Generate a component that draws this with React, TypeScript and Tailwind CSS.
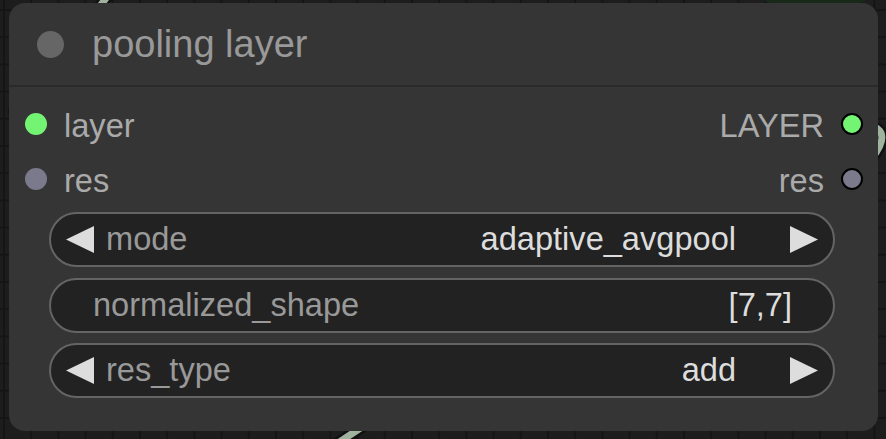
import React from "react";

const font = { fontFamily: '"Liberation Sans", Arial, sans-serif' };

function LeftArrow() {
  return (
    <svg width="28" height="27" viewBox="0 0 28 27" className="shrink-0">
      <polygon points="28,0 0,13.5 28,27" fill="#DDDDDD" />
    </svg>
  );
}

function RightArrow() {
  return (
    <svg width="28" height="27" viewBox="0 0 28 27" className="shrink-0">
      <polygon points="0,0 28,13.5 0,27" fill="#DDDDDD" />
    </svg>
  );
}

function ComboWidget({ label, value }: { label: string; value: string }) {
  return (
    <div className="h-[55px] rounded-full bg-[#222222] border-2 border-[#646464] flex items-center pl-[15px] pr-[15px]">
      <LeftArrow />
      <span className="ml-[12px] text-[32.6px] text-[#999999] leading-none">{label}</span>
      <span className="ml-auto text-[32.6px] text-[#DDDDDD] leading-none">{value}</span>
      <span className="ml-[54px]">
        <RightArrow />
      </span>
    </div>
  );
}

function TextWidget({ label, value }: { label: string; value: string }) {
  return (
    <div className="h-[55px] rounded-full bg-[#222222] border-2 border-[#646464] flex items-center pl-[42px] pr-[41px]">
      <span className="text-[32.6px] text-[#999999] leading-none">{label}</span>
      <span className="ml-auto text-[32.6px] text-[#DDDDDD] leading-none">{value}</span>
    </div>
  );
}

export default function App() {
  return (
    <div className="relative w-[886px] h-[439px] overflow-hidden bg-[#1c1c1c]" style={font}>
      {/* canvas grid and links */}
      <svg className="absolute inset-0" width="886" height="439">
        <defs>
          <pattern id="grid" x="3" y="9" width="27.2" height="27.2" patternUnits="userSpaceOnUse">
            <rect x="0" y="0" width="27.2" height="27.2" fill="#1d1d1d" />
            <rect x="0" y="0" width="2" height="27.2" fill="#151515" />
            <rect x="0" y="0" width="27.2" height="2" fill="#151515" />
          </pattern>
        </defs>
        <rect x="0" y="0" width="886" height="439" fill="url(#grid)" />
        <g fill="none" strokeLinecap="round">
          <path d="M 88 -40 C 200 -40, -60 123, 36 123" stroke="#111111" strokeWidth="12" />
          <path d="M 88 -40 C 200 -40, -60 123, 36 123" stroke="#9fb39f" strokeWidth="7" />
          <path d="M 851 123 C 887 123, 888 138, 872 158" stroke="#111111" strokeWidth="12" />
          <path d="M 851 123 C 887 123, 888 138, 872 158" stroke="#9fb39f" strokeWidth="7" />
          <path d="M 290 475 L 380 415" stroke="#111111" strokeWidth="12" />
          <path d="M 290 475 L 380 415" stroke="#9fb39f" strokeWidth="7" />
        </g>
      </svg>

      {/* bottom of another node, top right */}
      <div className="absolute left-[760px] top-[-20px] w-[110px] h-[23px] rounded-[12px] bg-[#18291a]" />

      {/* the node */}
      <div className="absolute left-[9px] top-[3px] w-[869px] h-[428px] rounded-[16px] bg-[#353535] flex flex-col">
        {/* title */}
        <div className="h-[82px] flex items-center pl-[28px] shrink-0">
          <div className="w-[27px] h-[27px] rounded-full bg-[#666666]" />
          <span className="ml-[28px] text-[38px] text-[#999999]">pooling layer</span>
        </div>
        <div className="h-[2px] bg-[#2a2a2a] shrink-0" />

        {/* slots */}
        <div className="pt-[9px] flex flex-col">
          <div className="h-[55px] flex items-center">
            <div className="ml-[16px] w-[22px] h-[22px] rounded-full bg-[#73f573]" />
            <span className="ml-[17px] pt-[5px] text-[32.6px] text-[#AAAAAA]">layer</span>
            <span className="ml-auto pt-[5px] text-[32.6px] text-[#AAAAAA]">LAYER</span>
            <div className="ml-[17px] mr-[15px] w-[22px] h-[22px] rounded-full bg-[#73f573] border-[2.5px] border-black" />
          </div>
          <div className="h-[55px] flex items-center">
            <div className="ml-[16px] w-[22px] h-[22px] rounded-full bg-[#7b7a8d]" />
            <span className="ml-[17px] pt-[5px] text-[32.6px] text-[#AAAAAA]">res</span>
            <span className="ml-auto pt-[5px] text-[32.6px] text-[#AAAAAA]">res</span>
            <div className="ml-[17px] mr-[15px] w-[22px] h-[22px] rounded-full bg-[#7b7a8d] border-[2.5px] border-black" />
          </div>
        </div>

        {/* widgets */}
        <div className="mt-[6px] ml-[40px] mr-[43px] flex flex-col gap-[10.5px]">
          <ComboWidget label="mode" value="adaptive_avgpool" />
          <TextWidget label="normalized_shape" value="[7,7]" />
          <ComboWidget label="res_type" value="add" />
        </div>
      </div>
    </div>
  );
}
